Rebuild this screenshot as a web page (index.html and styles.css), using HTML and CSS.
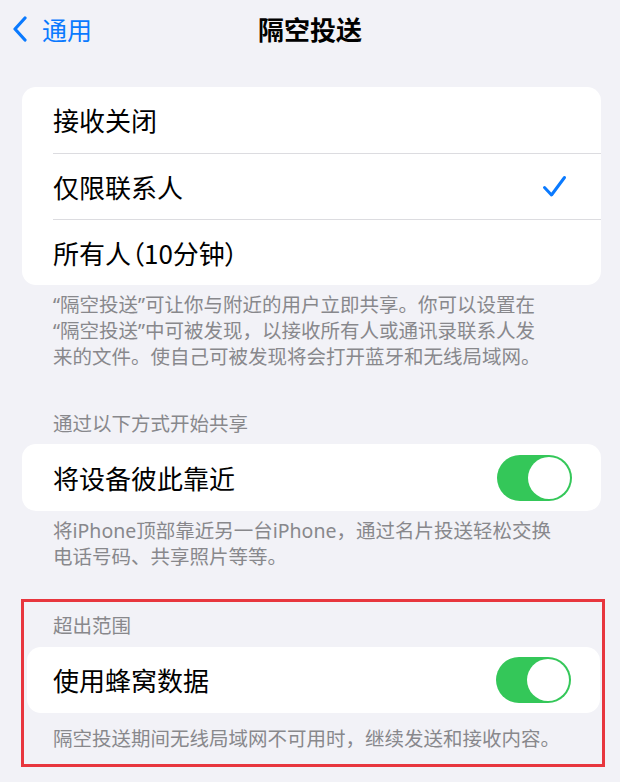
FILE: index.html
```html
<!DOCTYPE html>
<html lang="zh-CN">
<head>
<meta charset="utf-8">
<title>隔空投送</title>
<link rel="stylesheet" href="styles.css">
</head>
<body>
<div class="screen">
  <header class="nav">
    <a class="back" href="#">
      <svg class="chevron" width="16" height="26" viewBox="0 0 16 26"><polyline points="13,2 3,13 13,24" fill="none" stroke="currentColor" stroke-width="3.2" stroke-linecap="round" stroke-linejoin="round"/></svg>
      <span>通用</span>
    </a>
    <h1 class="title">隔空投送</h1>
    <span class="nav-spacer"></span>
  </header>

  <main class="content">
    <section class="group">
      <div class="card">
        <div class="row"><span class="label">接收关闭</span></div>
        <div class="row">
          <span class="label">仅限联系人</span>
          <svg class="check" width="25" height="23" viewBox="0 0 25 23"><polyline points="2.5,12.5 9.5,20 22.5,2.5" fill="none" stroke="currentColor" stroke-width="3" stroke-linecap="round" stroke-linejoin="round"/></svg>
        </div>
        <div class="row"><span class="label label-prop">所有人（10分钟）</span></div>
      </div>
      <p class="footer">“隔空投送”可让你与附近的用户立即共享。你可以设置在<br>“隔空投送”中可被发现，以接收所有人或通讯录联系人发<br>来的文件。使自己可被发现将会打开蓝牙和无线局域网。</p>
    </section>

    <section class="group">
      <h2 class="section-header">通过以下方式开始共享</h2>
      <div class="card">
        <div class="row row-tall">
          <span class="label">将设备彼此靠近</span>
          <span class="toggle on"><span class="knob"></span></span>
        </div>
      </div>
      <p class="footer">将iPhone顶部靠近另一台iPhone，通过名片投送轻松交换<br>电话号码、共享照片等等。</p>
    </section>

    <section class="group highlight">
      <h2 class="section-header">超出范围</h2>
      <div class="card">
        <div class="row">
          <span class="label">使用蜂窝数据</span>
          <span class="toggle on"><span class="knob"></span></span>
        </div>
      </div>
      <p class="footer">隔空投送期间无线局域网不可用时，继续发送和接收内容。</p>
    </section>
  </main>
</div>
</body>
</html>
```
FILE: styles.css
```css
* { box-sizing: border-box; }

html, body {
  margin: 0;
  padding: 0;
  background: #f2f2f7;
}

body {
  font-family: "Noto Sans CJK SC", "Noto Sans", "Liberation Sans", sans-serif;
  color: #000;
  width: 620px;
  height: 782px;
  overflow: hidden;
}

.screen {
  display: flex;
  flex-direction: column;
}

/* navigation bar */
.nav {
  height: 58px;
  display: grid;
  grid-template-columns: 1fr auto 1fr;
  align-items: center;
}

.back {
  display: flex;
  align-items: center;
  gap: 14px;
  padding-left: 12px;
  color: #0a7aff;
  text-decoration: none;
  font-size: 25px;
  line-height: 30px;
}

.back span { margin-top: -1px; }

.title {
  margin: 0;
  font-size: 26px;
  font-weight: 600;
  line-height: 32px;
  letter-spacing: 0;
}

/* content */
.content {
  --inset: 31px;
  padding: 0 19px 0 22px;
  display: flex;
  flex-direction: column;
}

.group { display: flex; flex-direction: column; }

.group:first-child { margin-top: 29px; }

.card {
  background: #fff;
  border-radius: 14px;
  padding-left: var(--inset);
  overflow: hidden;
}

.row {
  height: 66px;
  display: flex;
  align-items: center;
  justify-content: space-between;
  padding-right: 29px;
}

.row + .row { border-top: 1px solid #dcdce0; }

.row-tall { height: 67px; }

.label {
  font-size: 26px;
  line-height: 32px;
}

.label-prop { font-feature-settings: "palt"; }

.check {
  color: #0a7aff;
  margin-right: 5px;
}

.footer {
  margin: 0;
  padding: 7px 0 0 var(--inset);
  font-family: "Noto Sans", "Noto Sans CJK SC", sans-serif;
  font-size: 19.5px;
  line-height: 26px;
  color: #88888c;
}

.section-header {
  margin: 40px 0 8px;
  padding-left: var(--inset);
  font-size: 19.5px;
  line-height: 26px;
  font-weight: 400;
  color: #88888c;
}

/* toggle */
.toggle {
  width: 75px;
  height: 46px;
  border-radius: 23px;
  background: #e9e9eb;
  padding: 2px;
  display: flex;
}

.toggle.on {
  background: #34c759;
  justify-content: flex-end;
}

.knob {
  width: 42px;
  height: 42px;
  border-radius: 50%;
  background: #fff;
}

/* highlighted (annotated) section */
.highlight {
  --inset: 26px;
  margin: 29px -4px 0 -1px;
  border: 3px solid #e8363e;
  padding: 10px 2px 12px 3px;
}

.highlight .section-header { margin: 0 0 9px; }

.highlight .footer { padding-top: 13px; }
```
